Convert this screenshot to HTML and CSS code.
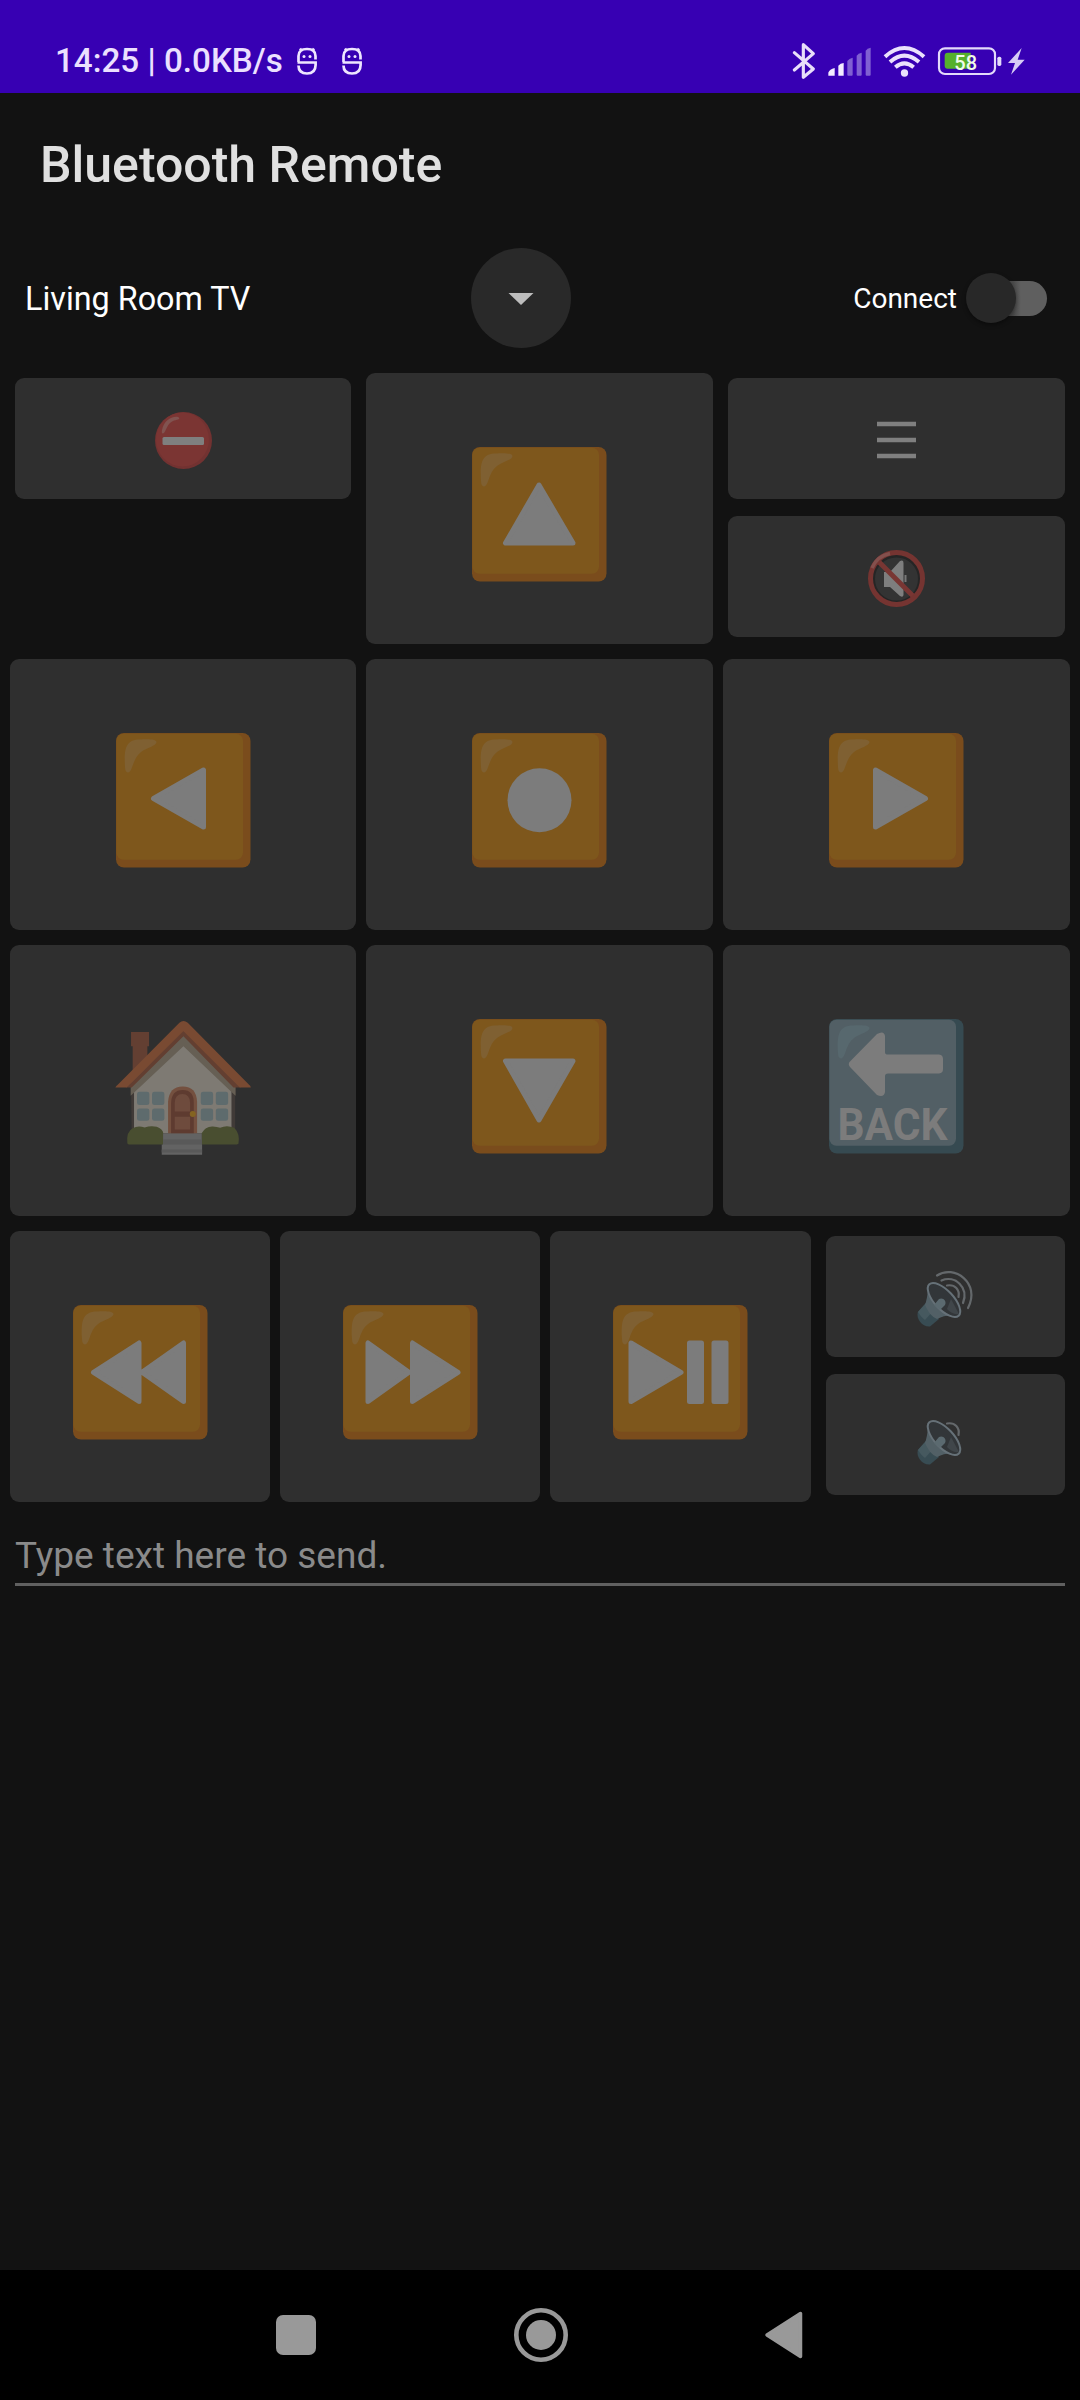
FILE: index.html
```html
<!DOCTYPE html>
<html lang="en">
<head>
<meta charset="utf-8">
<title>Bluetooth Remote</title>
<link rel="stylesheet" href="styles.css">
</head>
<body>
<svg width="0" height="0" class="defs" aria-hidden="true">
  <defs>
    <g id="key">
      <rect width="134.5" height="134.5" rx="8" fill="#7a4c1c"/>
      <rect x="0.4" y="0.8" width="126.6" height="126" rx="7" fill="#7e571c"/>
      <path d="M9 34C8 17 9 6.500 24 6.500C32 6 40 6 40.500 9C40.500 13 32 14 25 19C16 26 17 39 12 39.500C10 39.500 9 37 9 34Z" fill="#7f6032"/>
    </g>
    <g id="speaker">
      <path d="M9 33L0.800 42C-1 49 5 57 13 56.500L22 49Z" fill="#384c53"/>
      <path d="M4 38.500L9 33L16 41L8 50C5 48 3 45 1 42Z" fill="#46595f"/>
      <path d="M11 15C11 26 9 32 8 35C11 42 15 47 20 49C27 45 34 45 41 46C35 33 25 18 11 15Z" fill="#526066"/>
      <ellipse cx="27" cy="30" rx="21.500" ry="9.500" transform="rotate(47 27 30)" fill="#323639" stroke="#667178" stroke-width="2"/>
      <path d="M34 29L42 44C37 45 33 42 30 39Z" fill="#40464a"/>
      <path d="M17 35L22 29C26 27 30 31 28 35L23 40Z" fill="#5b6a70"/>
      <path d="M30 15.500C38 14 43 20 41.500 27" class="wave"/>
    </g>
    <g id="robot">
      <path d="M1.500 15V9Q1.500 2 10 2T18.500 9V12.500M0.500 15.500H18.600V18Q18.500 26.500 10 26.500T1.500 18.500M3 1.500L5 4M17 1.500L15 4"/>
      <circle cx="7" cy="9.500" r="1.500"/><circle cx="13" cy="9.500" r="1.500"/>
    </g>
  </defs>
</svg>

<header class="status">
  <div class="status-left">
    <span class="clock">14:25 | 0.0KB/s</span>
    <svg class="robot" viewBox="0 0 20 28"><use href="#robot"/></svg>
    <svg class="robot" viewBox="0 0 20 28"><use href="#robot"/></svg>
  </div>
  <div class="status-right">
    <svg width="22" height="36" viewBox="102 67 66 108"><path d="M106 96L163 145L133 170V72L163 99L106 148" fill="none" stroke="#e8defa" stroke-width="9.500" stroke-linejoin="round" stroke-linecap="round"/></svg>
    <svg width="43" height="36" viewBox="205 67 129 108"><g fill="#f3ecff"><path d="M206 165V156Q210 146 225 142V165Z"/><path d="M236 165V135Q242 128 252 127V165Z"/></g><g fill="#8060d2"><path d="M263 162V121Q268 113 279 111V162Q279 165 276 165H266Q263 165 263 162Z"/><path d="M291 162V105Q296 98 306 96V162Q306 165 303 165H294Q291 165 291 162Z"/><path d="M318 162V90Q323 83 333 81V162Q333 165 330 165H321Q318 165 318 162Z"/></g></svg>
    <svg width="41" height="36" viewBox="370 67 123 108"><g fill="none" stroke="#ebe1fd" stroke-width="12"><path d="M373 108Q431 56 490 108"/><path d="M388 124Q431 86 475 124"/><path d="M404 140Q431 116 459 140"/></g><circle cx="431.500" cy="157" r="11" fill="#ebe1fd"/></svg>
    <svg width="64" height="36" viewBox="535 67 192 108"><rect x="538" y="83" width="168" height="77" rx="18" fill="none" stroke="#e4dafb" stroke-width="6.500"/><path d="M564 96H633V144H564Q555 144 555 135V105Q555 96 564 96Z" fill="#55b02c"/><rect x="713" y="108" width="12" height="28" rx="5" fill="#e4dafb"/><text x="618" y="147" class="percent" text-anchor="middle">58</text></svg>
    <svg width="17" height="36" viewBox="745 67 51 108"><path d="M786 82L745 127H766L754 162L795 117H774Z" fill="#d7ccf5"/></svg>
  </div>
</header>

<h1 class="title">Bluetooth Remote</h1>

<section class="device">
  <span class="device-name">Living Room TV</span>
  <button class="round"><svg width="26" height="12" viewBox="0 0 26 12"><path d="M0.500 0H25.500L13 12Z" fill="#bdbdbd"/></svg></button>
  <label class="connect"><span class="connect-text">Connect</span><span class="switch"><span class="thumb"></span></span></label>
</section>

<main class="remote">
  <div class="row thirds">
    <div class="stack">
      <button class="card small"><svg class="mini" viewBox="0 0 57 57"><circle cx="28.500" cy="28.500" r="28.500" fill="#723231"/><ellipse cx="27.500" cy="27.500" rx="26.500" ry="27" fill="#7b3533"/><rect x="7.500" y="25" width="41.500" height="8" rx="1.500" fill="#7f7f7f"/><path d="M7 18C9 9 16 4 23 5C27 7 21 8 18 9C12 12 12 17 9 21C7 22 6.500 21 7 18Z" fill="#815350"/></svg></button>
    </div>
    <button class="card"><svg class="emoji" viewBox="0 0 134.500 134.500"><use href="#key"/><path class="sign" d="M67 38L33.500 96H101Z"/></svg></button>
    <div class="stack">
      <button class="card small"><svg class="menu" width="39" height="38" viewBox="0 0 39 38"><path d="M0 3H39M0 19H39M0 35H39" stroke="#7f7f7f" stroke-width="4.700"/></svg></button>
      <button class="card small"><svg class="mini" viewBox="0 0 57 57"><circle cx="28.500" cy="29" r="23" fill="#333" stroke="#252525" stroke-width="3"/><path d="M16 22H22L32 11Q35.500 9.500 35.500 13V45Q35 48 32 46L22 37H16Z" fill="#7e7e7e"/><rect x="36.500" y="25" width="2" height="7" fill="#777"/><path d="M10 11L46 47" stroke="#793633" stroke-width="5"/><circle cx="28.500" cy="28.500" r="26" fill="none" stroke="#753431" stroke-width="5"/><path d="M4 18Q9 6 22 3.500" fill="none" stroke="#83504d" stroke-width="3.500"/></svg></button>
    </div>
  </div>
  <div class="row thirds">
    <button class="card"><svg class="emoji" viewBox="0 0 134.500 134.500"><use href="#key"/><path class="sign" d="M37.500 65.500L87.500 37V94Z"/></svg></button>
    <button class="card"><svg class="emoji" viewBox="0 0 134.500 134.500"><use href="#key"/><circle cx="67.500" cy="67.300" r="32" fill="#7c7c7c"/></svg></button>
    <button class="card"><svg class="emoji" viewBox="0 0 134.500 134.500"><use href="#key"/><path class="sign" d="M96.500 65.500L46.500 37V94Z"/></svg></button>
  </div>
  <div class="row thirds">
    <button class="card"><svg class="emoji" viewBox="48 59 403 403">
      <path d="M93 98H147V141H142V185L98 222V141H93Z" fill="#633f32"/>
      <path d="M93 250H407V288H405V402H95Z" fill="#403a37"/>
      <path d="M102 262L250 120L394 262V402H102Z" fill="#7e7a73"/>
      <path d="M92 246L250 105L406 246V289L250 141L92 289Z" fill="#665f54"/>
      <path d="M78 264L250 94L422 264H400L250 111L95 264Z" fill="#633f31"/>
      <path d="M46 264Q48 260 54 255L238 70Q250 60 263 70L446 255Q452 260 452 264H419L250 96L80 264Z" fill="#794a32"/>
      <g fill="#5e6b6d"><rect x="111" y="277" width="37" height="40" rx="7"/><rect x="156" y="277" width="37" height="40" rx="7"/><rect x="111" y="327" width="37" height="37" rx="7"/><rect x="156" y="327" width="37" height="37" rx="7"/><rect x="302" y="277" width="37" height="40" rx="7"/><rect x="347" y="277" width="37" height="40" rx="7"/><rect x="302" y="327" width="37" height="37" rx="7"/><rect x="347" y="327" width="37" height="37" rx="7"/></g>
      <path d="M204 402V307Q207 261 248 261T291 307V402Z" fill="#74503f"/>
      <path d="M213 402V312Q214 272 248 272T281 312V402Z" fill="#5e3b30"/>
      <path d="M224 336V310Q225 284 247 284T270 310V336ZM224 352H270V390H224Z" fill="#6e4b3d"/>
      <circle cx="278" cy="344" r="9" fill="#846320"/>
      <path d="M82 432Q78 396 98 386Q114 377 134 384Q152 378 170 382Q188 388 190 402V435H86ZM304 402Q316 380 338 381Q351 382 360 385Q380 376 402 385Q420 402 415 433L410 435H304Z" fill="#494e30"/>
      <path d="M189 402H305V435H306V466H185V435H189Z" fill="#636363"/>
      <path d="M189 420H305V435H189ZM185 450H306V459H185Z" fill="#595959"/>
    </svg></button>
    <button class="card"><svg class="emoji" viewBox="0 0 134.500 134.500"><use href="#key"/><path class="sign" d="M67 101L33.500 42H101Z"/></svg></button>
    <button class="card"><svg class="emoji" viewBox="0 0 134.500 134.500">
      <rect width="134.500" height="134.500" rx="8" fill="#364a51"/>
      <rect x="0.400" y="0.800" width="126.600" height="126" rx="7" fill="#525f65"/>
      <path d="M9 34C8 17 9 6.500 24 6.500C32 6 40 6 40.500 9C40.500 13 32 14 25 19C16 26 17 39 12 39.500C10 39.500 9 37 9 34Z" fill="#57686e"/>
      <path d="M21 42.500L48 15Q55 11 56 17V33Q56 35.600 59 35.600H110Q114 36 114 40V50Q114 54.400 110 54.400H59Q56 54.400 56 57V73Q55 79 48 76L21 48Q18.500 45 21 42.500Z" fill="#7c7c7c"/>
      <text x="8.500" y="121" class="back-label" textLength="110" lengthAdjust="spacingAndGlyphs">BACK</text>
    </svg></button>
  </div>
  <div class="row media">
    <button class="card"><svg class="emoji" viewBox="0 0 134.500 134.500"><use href="#key"/><path class="sign" d="M20.500 67.300L66 38V96.500ZM69 67.300L110.500 38V96.500Z"/></svg></button>
    <button class="card"><svg class="emoji" viewBox="0 0 134.500 134.500"><use href="#key"/><path class="sign" d="M66 67.300L25 38V96.500ZM115 67.300L69.500 38V96.500Z"/></svg></button>
    <button class="card"><svg class="emoji" viewBox="0 0 134.500 134.500"><use href="#key"/><path class="sign" d="M68 67.300L18 38V96.500ZM76.500 38H88.500V96.500H76.500ZM101 38H113V96.500H101Z"/></svg></button>
    <div class="stack">
      <button class="card small"><svg class="mini" viewBox="0 0 57 57"><use href="#speaker"/><path class="wave" d="M24.500 10.500C38 5 52 17 46 33M20 5.500C37 -6 64 13 51 38"/></svg></button>
      <button class="card small"><svg class="mini" viewBox="0 0 57 57"><use href="#speaker"/></svg></button>
    </div>
  </div>
  <input class="message" type="text" placeholder="Type text here to send.">
</main>

<nav class="nav">
  <svg width="40" height="54" viewBox="0 0 40 54"><rect y="7" width="40" height="40" rx="7" fill="#999"/></svg>
  <svg width="54" height="54" viewBox="0 0 54 54"><circle cx="27" cy="27" r="24.700" fill="none" stroke="#999" stroke-width="4.600"/><circle cx="27" cy="27" r="15" fill="#999"/></svg>
  <svg width="38" height="54" viewBox="0 0 38 54"><path d="M2 27L35.500 5.500V48.500Z" fill="#999" stroke="#999" stroke-width="3.500" stroke-linejoin="round"/></svg>
</nav>
</body>
</html>
```
FILE: styles.css
```css
* { box-sizing: border-box; }

body {
  margin: 0;
  width: 1080px;
  height: 2400px;
  display: flex;
  flex-direction: column;
  background: #121212;
  color: #fff;
  font-family: Roboto, sans-serif;
  overflow: hidden;
}

svg { display: block; flex: none; overflow: visible; }
.defs { position: absolute; }
button { border: 0; padding: 0; font: inherit; }

.status {
  height: 93px;
  padding: 28px 55px 0 55px;
  display: flex;
  justify-content: space-between;
  align-items: center;
  background: #3700b3;
  color: #ebe0ff;
}
.status-left { display: flex; align-items: center; }
.clock { font-size: 33.200px; font-weight: 500; line-height: 40px; width: 242px; white-space: nowrap; }
.robot { width: 20px; height: 28px; margin-right: 25px; fill: #eee5ff; }
.robot path, #robot path { fill: none; stroke: #eee5ff; stroke-width: 2.700; }
.status-right { display: flex; gap: 13px; }
.status-right svg:last-child { margin-left: -7px; }
.percent { font-size: 60px; font-weight: 500; fill: #f0fbe9; }

.title {
  margin: 0;
  height: 145px;
  padding: 42px 40px 0;
  font-size: 50px;
  line-height: 60px;
  font-weight: 500;
  color: #e0e0e0;
}

.device {
  height: 120px;
  padding: 0 33px 0 25px;
  display: flex;
  align-items: center;
}
.device-name { width: 446px; padding-top: 2px; font-size: 32.300px; }
.round {
  width: 100px;
  height: 100px;
  padding-top: 2px;
  border-radius: 50%;
  display: flex;
  align-items: center;
  justify-content: center;
  background: #292929;
}
.connect { margin-left: auto; display: flex; align-items: center; gap: 15px; font-size: 28px; }
.connect-text { padding-top: 1px; }
.switch {
  width: 75px;
  height: 35px;
  border-radius: 18px;
  display: flex;
  align-items: center;
  background: linear-gradient(90deg, #4a4a4a 55%, #5f5f5f 65%);
}
.thumb {
  width: 50px;
  height: 50px;
  margin-left: -6px;
  border-radius: 50%;
  background: #282828;
  box-shadow: 0 2px 4px rgba(0, 0, 0, .4);
}

.remote { flex: 1; padding: 15px 10px 0; display: flex; flex-direction: column; gap: 15px; }
.row { height: 271px; display: grid; gap: 10px; }
.thirds { grid-template-columns: 346px 347px 347px; }
.media { grid-template-columns: 260px 260px 261px 249px; }
.stack { padding: 5px; display: flex; flex-direction: column; gap: 17px; }
.card {
  border-radius: 9px;
  background: #2f2f2f;
  display: flex;
  align-items: center;
  justify-content: center;
}
.small { height: 121px; }
.emoji { width: 134.500px; height: 134.500px; margin-top: 12px; }
.mini { width: 57px; height: 57px; margin-top: 4px; }
.menu { margin-top: 2px; }
.sign { fill: #7c7c7c; stroke: #7c7c7c; stroke-width: 5; stroke-linejoin: round; }
.wave { fill: none; stroke: #64686b; stroke-width: 2.200; stroke-linecap: round; }
.back-label { font-size: 43.500px; font-weight: 700; fill: #7c7c7c; }

.message {
  height: 69px;
  margin: 0 5px;
  padding: 19px 0 9px;
  border: 0;
  border-bottom: 3px solid #606060;
  background: none;
  color: #fff;
  font: 37px Roboto, sans-serif;
}
.message::placeholder { color: #8a8a8a; opacity: 1; }

.nav {
  height: 130px;
  padding: 0 277px 0 276px;
  display: flex;
  align-items: center;
  justify-content: space-between;
  background: #000;
}
```
